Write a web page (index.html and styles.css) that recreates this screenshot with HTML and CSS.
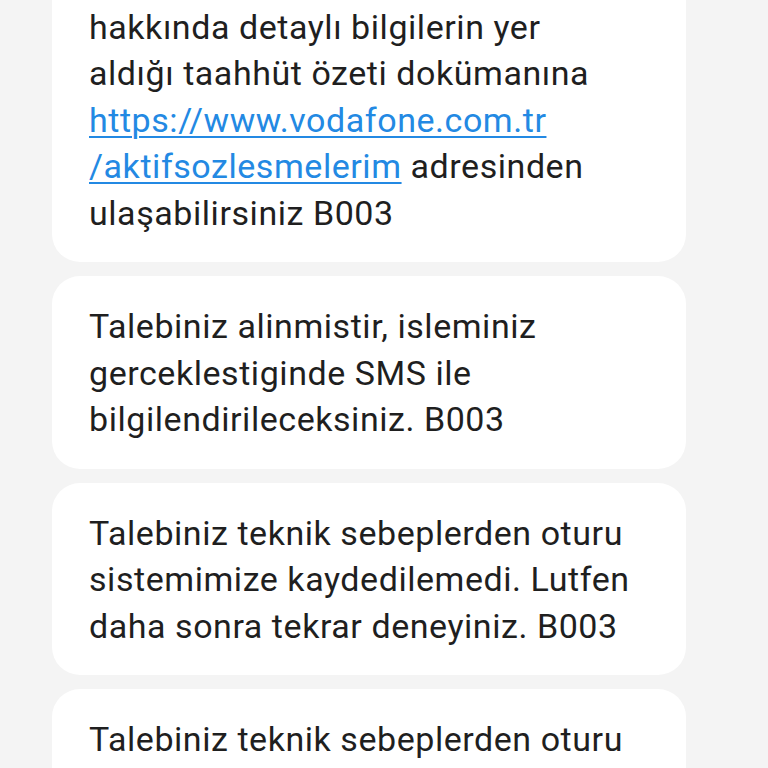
FILE: index.html
```html
<!DOCTYPE html>
<html lang="tr">
<head>
<meta charset="utf-8">
<link rel="stylesheet" href="styles.css">
</head>
<body>
<div class="thread">
  <div class="bubble first">
    <p class="msg">Sayın abone, taahhüdünüz<br>hakkında detaylı bilgilerin yer<br>aldığı taahhüt özeti dokümanına<br><a class="link" href="#">https://www.vodafone.com.tr<br>/aktifsozlesmelerim</a> adresinden<br>ulaşabilirsiniz B003</p>
  </div>
  <div class="bubble">
    <p class="msg">Talebiniz alinmistir, isleminiz<br>gerceklestiginde SMS ile<br>bilgilendirileceksiniz. B003</p>
  </div>
  <div class="bubble">
    <p class="msg">Talebiniz teknik sebeplerden oturu<br>sistemimize kaydedilemedi. Lutfen<br>daha sonra tekrar deneyiniz. B003</p>
  </div>
  <div class="bubble">
    <p class="msg">Talebiniz teknik sebeplerden oturu<br>sistemimize kaydedilemedi. Lutfen<br>daha sonra tekrar deneyiniz. B003</p>
  </div>
</div>
</body>
</html>
```
FILE: styles.css
```css
html, body {
  margin: 0;
  padding: 0;
  background: #f4f4f4;
  height: 768px;
  overflow: hidden;
}
.thread {
  display: flex;
  flex-direction: column;
  gap: 14px;
  padding: 0 82px 0 52px;
}
.bubble {
  background: #ffffff;
  border-radius: 28px;
  padding: 27px 10px 26px 37px;
}
.bubble.first {
  margin-top: -70px;
}
.msg {
  margin: 0;
  font-family: Roboto, "Noto Sans", sans-serif;
  font-size: 34px;
  letter-spacing: 0.55px;
  line-height: 46.5px;
  color: #1f1f1f;
  white-space: nowrap;
}
.link {
  color: #2389e3;
  text-decoration: underline;
  text-decoration-thickness: 2px;
  text-underline-offset: 4px;
}
```
